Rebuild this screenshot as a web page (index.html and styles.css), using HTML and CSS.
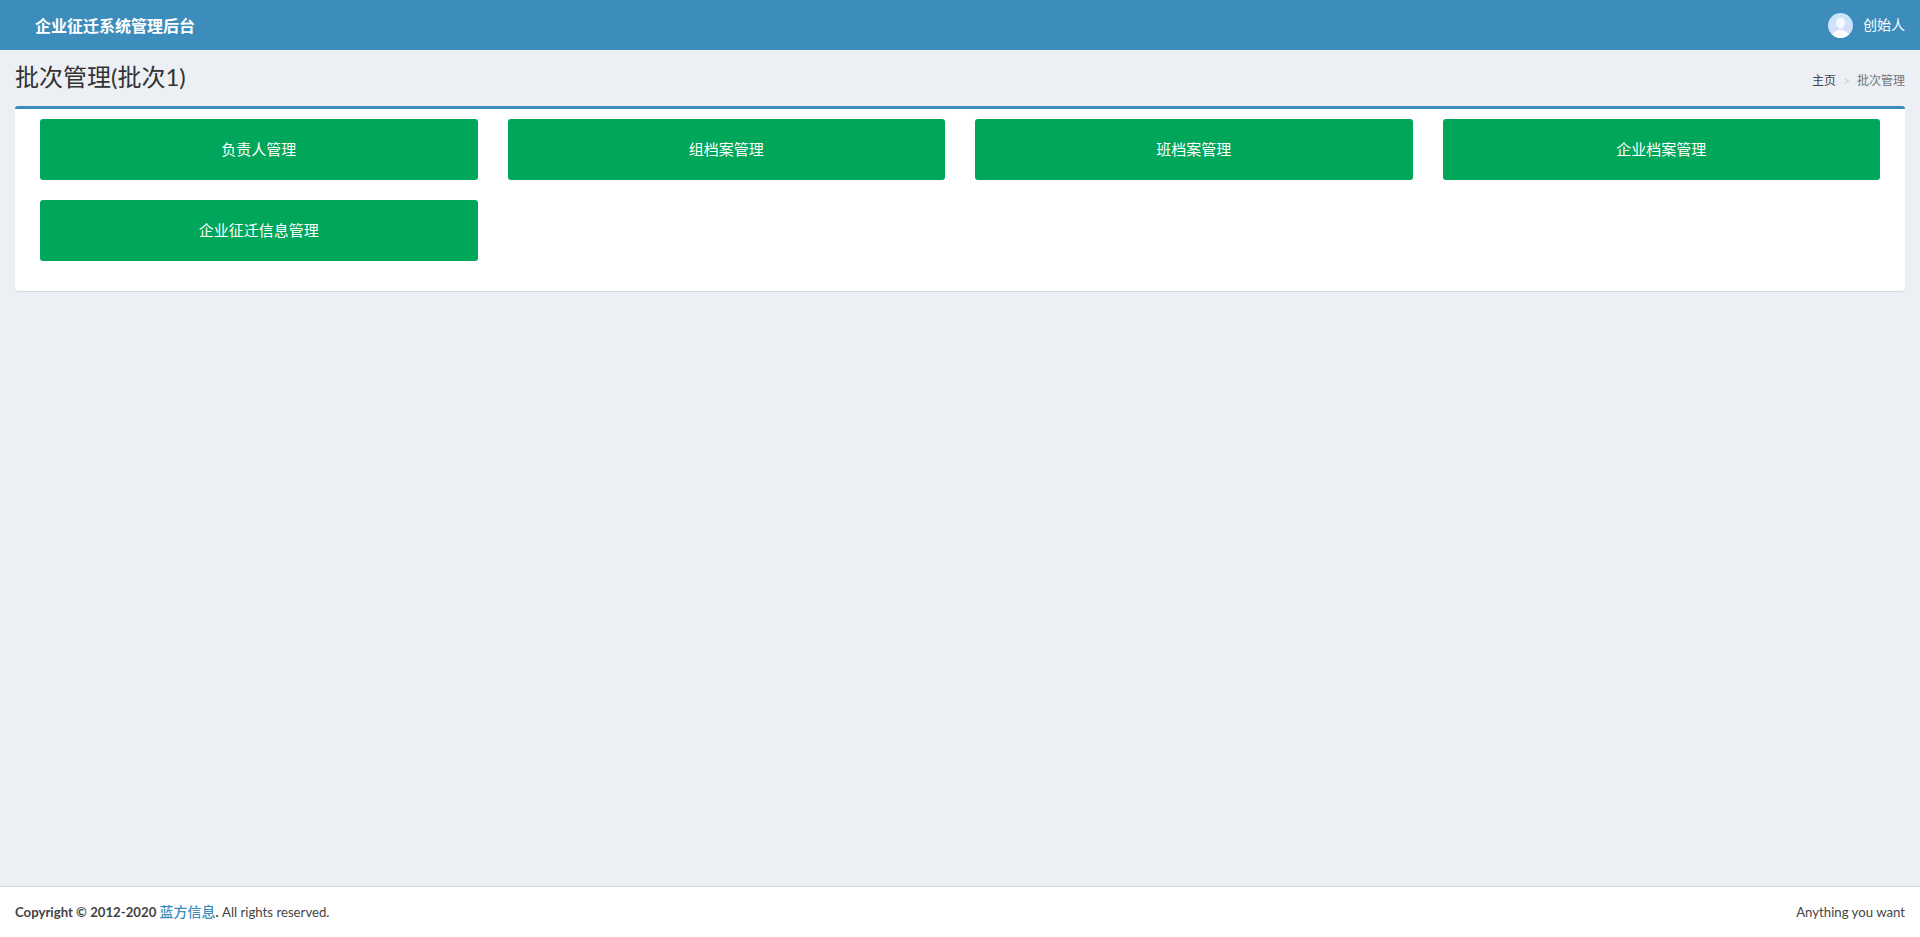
FILE: index.html
```html
<!DOCTYPE html>
<html lang="zh-CN">
<head>
<meta charset="utf-8">
<title>企业征迁系统管理后台</title>
<link rel="stylesheet" href="styles.css">
</head>
<body>
<div class="wrapper">
  <header class="topbar">
    <a class="brand" href="#">企业征迁系统管理后台</a>
    <a class="user" href="#">
      <svg class="avatar" viewBox="0 0 25 25" aria-hidden="true">
        <defs>
          <linearGradient id="avatarBg" x1="0" y1="0" x2="0" y2="1">
            <stop offset="0" stop-color="#c4e6fb"/>
            <stop offset="1" stop-color="#dcdcfd"/>
          </linearGradient>
          <clipPath id="avatarClip"><circle cx="12.5" cy="12.5" r="12.5"/></clipPath>
        </defs>
        <g clip-path="url(#avatarClip)">
          <rect width="25" height="25" fill="url(#avatarBg)"/>
          <ellipse cx="12.5" cy="10" rx="4.6" ry="5.6" fill="#f6f8ff"/>
          <path d="M3 25c.5-5 4.5-7 7.5-8h4c3 1 7 3 7.5 8z" fill="#ffffff"/>
        </g>
      </svg>
      <span>创始人</span>
    </a>
  </header>
  <main class="content">
    <div class="content-header">
      <h1>批次管理(批次1)</h1>
      <ol class="crumbs">
        <li><a href="#">主页</a></li>
        <li class="sep">&gt;</li>
        <li class="current">批次管理</li>
      </ol>
    </div>
    <section class="box">
      <div class="grid">
        <a class="btn" href="#">负责人管理</a>
        <a class="btn" href="#">组档案管理</a>
        <a class="btn" href="#">班档案管理</a>
        <a class="btn" href="#">企业档案管理</a>
        <a class="btn" href="#">企业征迁信息管理</a>
      </div>
    </section>
  </main>
  <footer class="footer">
    <div><strong>Copyright © 2012-2020 <a href="#">蓝方信息</a>.</strong> All rights reserved.</div>
    <div>Anything you want</div>
  </footer>
</div>
</body>
</html>
```
FILE: styles.css
```css
* { box-sizing: border-box; }
html, body { margin: 0; height: 100%; }
body {
  font-family: Lato, "Noto Sans CJK SC", sans-serif;
  font-size: 14px;
  line-height: 1.42857;
  color: #333;
  background: #ecf0f5;
}
a { text-decoration: none; }
.wrapper { min-height: 100%; display: flex; flex-direction: column; }
.topbar {
  height: 50px;
  flex: none;
  background: #3c8dbc;
  display: flex;
  align-items: center;
  justify-content: space-between;
  padding: 0 15px 0 35px;
}
.brand { color: #fff; font-size: 16px; font-weight: 700; font-family: "Noto Sans CJK SC", sans-serif; }
.user { display: flex; align-items: center; gap: 10px; color: #fff; font-size: 14px; }
.avatar { width: 25px; height: 25px; display: block; }
.content { flex: 1; padding: 0 15px; }
.content-header {
  height: 56px;
  display: flex;
  justify-content: space-between;
}
.content-header h1 {
  margin: 0;
  padding-top: 14px;
  font-size: 24px;
  font-weight: 400;
  line-height: 1.1;
  color: #333;
}
.crumbs {
  list-style: none;
  margin: 0;
  padding: 22px 0 0;
  display: flex;
  gap: 7px;
  font-size: 12px;
  line-height: 18px;
}
.crumbs a { color: #444; }
.crumbs .sep { color: #ccc; }
.crumbs .current { color: #777; }
.box {
  background: #fff;
  border-top: 3px solid #3c8dbc;
  border-radius: 3px;
  box-shadow: 0 1px 1px rgba(0, 0, 0, .1);
  padding: 10px;
}
.grid { display: grid; grid-template-columns: repeat(4, 1fr); }
.btn {
  display: flex;
  align-items: center;
  justify-content: center;
  height: 61px;
  margin: 0 15px 20px;
  background: #00a65a;
  border-radius: 3px;
  color: #fff;
  font-size: 15px;
}
.footer {
  flex: none;
  height: 51px;
  background: #fff;
  border-top: 1px solid #d2d6de;
  padding: 15px;
  display: flex;
  justify-content: space-between;
  font-size: 13.2px;
  line-height: 20px;
  color: #444;
}
.footer a { color: #3c8dbc; font-size: 14px; font-weight: 500; }
```
